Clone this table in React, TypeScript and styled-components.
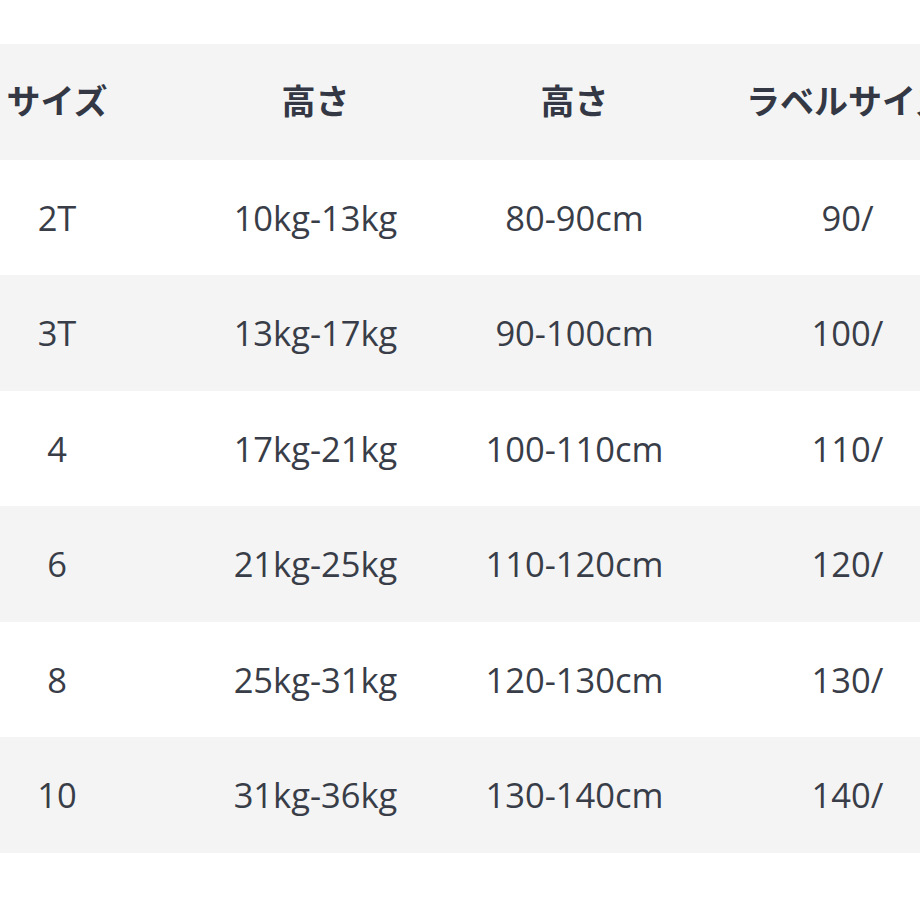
import React from "react";
import styled, { createGlobalStyle, css } from "styled-components";

const GlobalStyle = createGlobalStyle`
  html, body {
    margin: 0;
    padding: 0;
    background: #ffffff;
  }
  body {
    font-family: "Open Sans", "Noto Sans CJK JP", sans-serif;
    color: #353a45;
  }
`;

const Viewport = styled.div(() => css`
  width: 920px;
  height: 920px;
  overflow: hidden;
  padding-top: 44px;
  box-sizing: border-box;
`);

// the table is wider than the window and its first column is partly scrolled off
const Table = styled.div(() => css`
  display: grid;
  grid-template-columns: 258px 259px 259px 287px;
  margin-left: -72px;
  width: max-content;
`);

const Row = styled.div<{ $shaded: boolean }>(({ $shaded }) => css`
  display: contents;
  & > * {
    background: ${$shaded ? "#f4f4f4" : "#ffffff"};
  }
`);

const HeadCell = styled.div(() => css`
  height: 115.5px;
  display: flex;
  align-items: center;
  justify-content: center;
  white-space: nowrap;
  padding-bottom: 4px;
  box-sizing: border-box;
  font-family: "Noto Sans CJK JP", sans-serif;
  font-weight: 700;
  font-size: 34px;
  color: #333844;
`);

const Cell = styled.div(() => css`
  height: 115.5px;
  display: flex;
  align-items: center;
  justify-content: center;
  white-space: nowrap;
  font-family: "Open Sans", sans-serif;
  font-size: 34.5px;
  color: #383d48;
`);

const headers = ["サイズ", "高さ", "高さ", "ラベルサイズ"];

const rows = [
  ["2T", "10kg-13kg", "80-90cm", "90/"],
  ["3T", "13kg-17kg", "90-100cm", "100/"],
  ["4", "17kg-21kg", "100-110cm", "110/"],
  ["6", "21kg-25kg", "110-120cm", "120/"],
  ["8", "25kg-31kg", "120-130cm", "130/"],
  ["10", "31kg-36kg", "130-140cm", "140/"],
];

export default function App() {
  return (
    <>
      <GlobalStyle />
      <Viewport>
        <Table>
          <Row $shaded>
            {headers.map((h, i) => (
              <HeadCell key={i}>{h}</HeadCell>
            ))}
          </Row>
          {rows.map((r, i) => (
            <Row key={i} $shaded={i % 2 === 1}>
              {r.map((c, j) => (
                <Cell key={j}>{c}</Cell>
              ))}
            </Row>
          ))}
        </Table>
      </Viewport>
    </>
  );
}
